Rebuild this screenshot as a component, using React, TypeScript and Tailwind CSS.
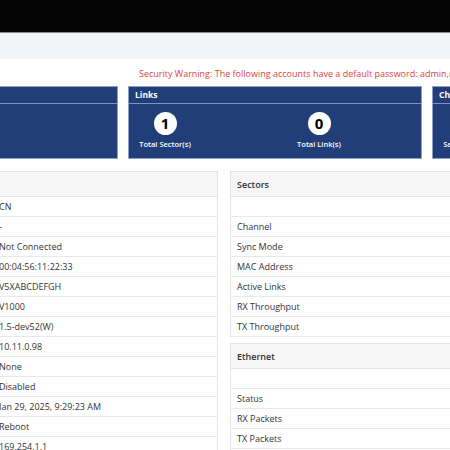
import React from "react";

const leftRows: [string, string][] = [
  ["Mode", "CN"],
  ["Name", "-"],
  ["Cloud", "Not Connected"],
  ["MAC Address", "00:04:56:11:22:33"],
  ["Serial Number", "V5XABCDEFGH"],
  ["Model", "V1000"],
  ["Firmware", "1.5-dev52(W)"],
  ["IP Address", "10.11.0.98"],
  ["GPS", "None"],
  ["Auto Reboot", "Disabled"],
  ["Time", "Jan 29, 2025, 9:29:23 AM"],
  ["Reason", "Reboot"],
  ["Link Local", "169.254.1.1"],
];

function Card({ title, items }: { title: string; items: { n: string; label: string }[] }) {
  return (
    <div className="w-[294px] h-[73px] shrink-0 bg-[#213e78] border border-[#8c9fc6] flex flex-col">
      <div className="h-[17px] shrink-0 border-b border-[#7d92bf] px-[6px] pt-[1px] flex items-center text-white text-[8.5px] font-bold">
        {title}
      </div>
      <div className="flex pl-[9px] gap-[100px] pt-[8px]">
        {items.map((it, i) => (
          <div key={i} className="w-[54px] flex flex-col items-center">
            <div className="w-[23px] h-[23px] rounded-full bg-white flex items-center justify-center text-black text-[15px] font-bold leading-none">
              {it.n}
            </div>
            <div className="mt-[4px] text-white text-[7.5px] font-semibold whitespace-nowrap leading-[10px]">
              {it.label}
            </div>
          </div>
        ))}
      </div>
    </div>
  );
}

function Table({ title, rows, emptyRow }: { title: string; rows: [string, string][]; emptyRow?: boolean }) {
  return (
    <div className="w-[300px] border-x border-[#e3e3e3]">
      <div className="h-[26px] border-y border-[#e3e3e3] bg-[#f6f6f6] flex items-center px-[6px] pt-[1px] font-semibold text-[#333]">
        {title}
      </div>
      {emptyRow && <div className="h-[20px] border-b border-[#e8e8e8]" />}
      {rows.map(([a, b], i) => (
        <div key={i} className="h-[20px] border-b border-[#e8e8e8] flex items-center pt-[1px]">
          <div className="w-[150px] px-[6px] whitespace-nowrap">{a}</div>
          <div className="px-[6px] whitespace-nowrap">{b}</div>
        </div>
      ))}
    </div>
  );
}

export default function App() {
  return (
    <div className="w-[450px] h-[450px] overflow-hidden bg-white font-['Open_Sans',sans-serif] text-[9px] text-[#333]">
      <div className="h-[33px] bg-[#050505] border-b border-[#8a8a8a]" />
      <div className="h-[26px] bg-[#f3f4f6]" />
      <div className="h-[27px] flex items-center pl-[139px] pt-[2px] text-[#e0433e] whitespace-nowrap text-[9px]">
        Security Warning: The following accounts have a default password: admin,manager
      </div>
      <div className="flex gap-[10px] ml-[-176px]">
        <Card title="Sectors" items={[]} />
        <Card
          title="Links"
          items={[
            { n: "1", label: "Total Sector(s)" },
            { n: "0", label: "Total Link(s)" },
          ]}
        />
        <Card
          title="Channels"
          items={[
            { n: "1", label: "Same Channel" },
            { n: "0", label: "Total" },
          ]}
        />
      </div>
      <div className="mt-[12px] flex gap-[12px] ml-[-82px] items-start">
        <div className="w-[300px] border-x border-[#e3e3e3] shrink-0">
          <div className="h-[26px] border-y border-[#e3e3e3] bg-[#f6f6f6] flex items-center px-[6px] font-semibold">
            System
          </div>
          {leftRows.map(([a, b], i) => (
            <div key={i} className="h-[20px] border-b border-[#e8e8e8] flex items-center pt-[1px]">
              <div className="w-[74px] shrink-0 pl-[6px] whitespace-nowrap overflow-hidden">{a}</div>
              <div className="pl-[6px] whitespace-nowrap">{b}</div>
            </div>
          ))}
        </div>
        <div className="flex flex-col gap-[6px] shrink-0">
          <Table
            title="Sectors"
            emptyRow
            rows={[
              ["Channel", ""],
              ["Sync Mode", ""],
              ["MAC Address", ""],
              ["Active Links", ""],
              ["RX Throughput", ""],
              ["TX Throughput", ""],
            ]}
          />
          <Table
            title="Ethernet"
            emptyRow
            rows={[
              ["Status", ""],
              ["RX Packets", ""],
              ["TX Packets", ""],
              ["Errors", ""],
            ]}
          />
        </div>
      </div>
    </div>
  );
}
